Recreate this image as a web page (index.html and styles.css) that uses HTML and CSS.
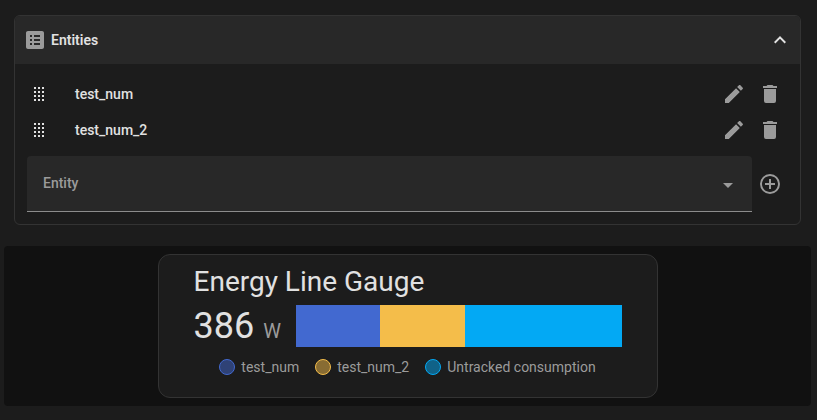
FILE: index.html
```html
<!DOCTYPE html>
<html lang="en">
<head>
<meta charset="utf-8">
<meta name="viewport" content="width=device-width, initial-scale=1">
<title>Energy Line Gauge</title>
<link rel="stylesheet" href="styles.css">
</head>
<body>
<svg class="sprite" aria-hidden="true">
  <symbol id="drag" viewBox="0 0 24 24"><path d="M7 5h2v2H7zM11 5h2v2h-2zM15 5h2v2h-2zM7 9h2v2H7zM11 9h2v2h-2zM15 9h2v2h-2zM7 13h2v2H7zM11 13h2v2h-2zM15 13h2v2h-2zM7 17h2v2H7zM11 17h2v2h-2zM15 17h2v2h-2z"/></symbol>
  <symbol id="pencil" viewBox="0 0 24 24"><path d="M20.71 7.04C21.1 6.65 21.1 6 20.71 5.63L18.37 3.29C18 2.9 17.35 2.9 16.96 3.29L15.12 5.12L18.87 8.87M3 17.25V21H6.75L17.81 9.93L14.06 6.18L3 17.25Z"/></symbol>
  <symbol id="trash" viewBox="0 0 24 24"><path d="M19 4H15.5L14.5 3H9.5L8.5 4H5V6H19M6 19A2 2 0 0 0 8 21H16A2 2 0 0 0 18 19V7H6V19Z"/></symbol>
</svg>
<section class="panel">
  <button class="panel-header" type="button" aria-expanded="true">
    <svg class="icon muted" viewBox="0 0 24 24"><path d="M19 3H5C3.9 3 3 3.9 3 5V19C3 20.1 3.9 21 5 21H19C20.1 21 21 20.1 21 19V5C21 3.9 20.1 3 19 3M7 7H9V9H7V7M7 11H9V13H7V11M7 15H9V17H7V15M17 17H11V15H17V17M17 13H11V11H17V13M17 9H11V7H17V9Z"/></svg>
    <span class="panel-title">Entities</span>
    <svg class="icon" viewBox="0 0 24 24"><path d="M7.41 15.41L12 10.83L16.59 15.41L18 14L12 8L6 14L7.41 15.41Z"/></svg>
  </button>
  <div class="panel-content">
    <ul class="entities">
      <li class="entity">
        <svg class="icon"><use href="#drag"/></svg>
        <span class="entity-name">test_num</span>
        <button class="icon-button" type="button" aria-label="Edit test_num"><svg class="icon"><use href="#pencil"/></svg></button>
        <button class="icon-button" type="button" aria-label="Remove test_num"><svg class="icon"><use href="#trash"/></svg></button>
      </li>
      <li class="entity">
        <svg class="icon"><use href="#drag"/></svg>
        <span class="entity-name">test_num_2</span>
        <button class="icon-button" type="button" aria-label="Edit test_num_2"><svg class="icon"><use href="#pencil"/></svg></button>
        <button class="icon-button" type="button" aria-label="Remove test_num_2"><svg class="icon"><use href="#trash"/></svg></button>
      </li>
    </ul>
    <div class="add-row">
      <div class="field">
        <select id="entity" class="field-select"><option value=""></option></select>
        <label class="field-label" for="entity">Entity</label>
        <svg class="icon field-arrow" viewBox="0 0 24 24"><path d="M7 10L12 15L17 10Z"/></svg>
      </div>
      <button class="icon-button" type="button" aria-label="Add entity"><svg class="icon" viewBox="0 0 24 24"><path d="M12 20C7.59 20 4 16.41 4 12S7.59 4 12 4 20 7.59 20 12 16.41 20 12 20M12 2A10 10 0 0 0 2 12A10 10 0 0 0 12 22A10 10 0 0 0 22 12A10 10 0 0 0 12 2M13 7H11V11H7V13H11V17H13V13H17V11H13V7Z"/></svg></button>
    </div>
  </div>
</section>
<section class="preview">
  <article class="card">
    <h1 class="card-title">Energy Line Gauge</h1>
    <div class="gauge">
      <div class="value">386 <span class="unit">W</span></div>
      <div class="bar">
        <div class="segment blue" style="flex-grow: 84"></div>
        <div class="segment amber" style="flex-grow: 85"></div>
        <div class="segment sky" style="flex-grow: 157"></div>
      </div>
    </div>
    <ul class="legend">
      <li class="legend-item"><span class="dot dot-blue"></span>test_num</li>
      <li class="legend-item"><span class="dot dot-amber"></span>test_num_2</li>
      <li class="legend-item"><span class="dot dot-sky"></span>Untracked consumption</li>
    </ul>
  </article>
</section>
</body>
</html>
```
FILE: styles.css
```css
* { box-sizing: border-box; }

body {
  margin: 0;
  padding: 15px 6px 14px 4px;
  background: #1c1c1c;
  color: #e1e1e1;
  font: 14px/20px Roboto, sans-serif;
}

ul { list-style: none; margin: 0; padding: 0; }
button { border: 0; padding: 0; background: none; color: inherit; font: inherit; cursor: pointer; }

.sprite { display: none; }
.icon { display: block; flex: none; width: 24px; height: 24px; fill: currentColor; }
.muted { color: #9b9b9b; }

.panel {
  margin: 0 10px;
  border: 1px solid #333;
  border-radius: 6px;
  overflow: hidden;
}
.panel-header {
  display: flex;
  align-items: center;
  gap: 4px;
  width: 100%;
  height: 48px;
  padding: 0 8px;
  background: #282828;
  text-align: left;
}
.panel-title { flex: 1; font-weight: 600; }
.panel-content { padding: 12px; }

.entity { display: flex; align-items: center; height: 36px; }
.entity-name { flex: 1; margin-left: 24px; font-weight: 500; }
.icon-button {
  display: flex;
  align-items: center;
  justify-content: center;
  flex: none;
  width: 36px;
  height: 36px;
  color: #9b9b9b;
}

.add-row { display: flex; align-items: center; margin-top: 8px; }
.field { position: relative; flex: 1; color: #9b9b9b; }
.field-select {
  display: block;
  appearance: none;
  width: 100%;
  height: 56px;
  padding: 0 48px 0 16px;
  border: 0;
  border-bottom: 1px solid #8c8c8c;
  border-radius: 4px 4px 0 0;
  background: #282828;
  color: #e1e1e1;
  font: inherit;
}
.field-label {
  position: absolute;
  top: 17px;
  left: 16px;
  font-weight: 500;
  pointer-events: none;
}
.field-arrow { position: absolute; top: 17px; right: 12px; pointer-events: none; }

.preview {
  margin-top: 21px;
  padding: 8px;
  border-radius: 4px;
  background: #111;
}
.card {
  max-width: 500px;
  min-height: 144px;
  margin: 0 auto;
  padding: 8px 35px;
  border: 1px solid #333;
  border-radius: 12px;
  background: #1c1c1c;
}
.card-title { margin: 0; font-size: 28px; line-height: 38px; font-weight: 400; }
.gauge { display: flex; align-items: center; gap: 15px; margin-top: 4px; }
.value { font-size: 36px; line-height: 42px; white-space: nowrap; }
.unit { color: #9b9b9b; font-size: 20px; line-height: 20px; }
.bar { display: flex; flex: 1; height: 42px; }
.segment { flex-basis: 0; }
.blue { background: #4269d0; }
.amber { background: #f4bd4a; }
.sky { background: #03a9f4; }

.legend {
  display: flex;
  justify-content: center;
  flex-wrap: wrap;
  gap: 4px 16px;
  margin-top: 10px;
  color: #9b9b9b;
}
.legend-item { display: flex; align-items: center; gap: 6px; }
.dot { width: 16px; height: 16px; border: 1px solid; border-radius: 50%; }
.dot-blue { border-color: #4269d0; background: #2f4276; }
.dot-amber { border-color: #f4bd4a; background: #886c33; }
.dot-sky { border-color: #03a9f4; background: #106288; }
```
